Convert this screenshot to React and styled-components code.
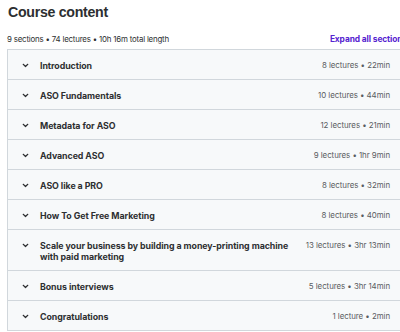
import React from "react";
import styled, { createGlobalStyle } from "styled-components";

const GlobalStyle = createGlobalStyle`
  html, body {
    margin: 0;
    padding: 0;
    background: #ffffff;
    overflow: hidden;
  }
  body {
    font-family: "Inter", "Liberation Sans", sans-serif;
    color: #2d2f31;
  }
`;

const Page = styled.div`
  width: 400px;
  padding: 0 0 0 7px;
`;

const Title = styled.h2`
  margin: 0;
  padding: 3px 0 0 1px;
  font-family: "Liberation Sans", "Inter", sans-serif;
  font-size: 14.2px;
  font-weight: 700;
  letter-spacing: -0.3px;
  line-height: 18px;
`;

const Summary = styled.div`
  display: flex;
  justify-content: space-between;
  align-items: center;
  margin-top: 11px;
  height: 14px;
  font-size: 7.9px;
  letter-spacing: -0.2px;
  color: #2d2f31;
  white-space: nowrap;
`;

const ExpandAll = styled.button`
  border: none;
  background: none;
  padding: 0;
  font-family: inherit;
  font-size: 8.4px;
  font-weight: 700;
  letter-spacing: -0.1px;
  color: #5624d0;
  cursor: pointer;
  white-space: nowrap;
`;

const Sections = styled.div`
  margin-top: 3px;
  border: 1px solid #d1d7dc;
  border-top: none;
`;

const Row = styled.div`
  display: flex;
  align-items: flex-start;
  box-sizing: border-box;
  min-height: 30px;
  padding: 9.5px 16px 8.5px 14px;
  background: #f7f9fa;
  border-top: 1px solid #d1d7dc;
  cursor: pointer;
`;

const Chevron = styled.span`
  display: flex;
  align-items: center;
  height: 11px;
  width: 18px;
  flex-shrink: 0;
  color: #2d2f31;
`;

const SectionTitle = styled.div`
  flex: 1;
  font-size: 8.8px;
  font-weight: 700;
  line-height: 11px;
  letter-spacing: -0.05px;
  padding-right: 12px;
`;

const Meta = styled.div`
  flex-shrink: 0;
  font-size: 7.9px;
  line-height: 11px;
  letter-spacing: -0.05px;
  color: #595c5f;
  white-space: nowrap;
`;

const sections = [
  { title: "Introduction", meta: "8 lectures • 22min" },
  { title: "ASO Fundamentals", meta: "10 lectures • 44min" },
  { title: "Metadata for ASO", meta: "12 lectures • 21min" },
  { title: "Advanced ASO", meta: "9 lectures • 1hr 9min" },
  { title: "ASO like a PRO", meta: "8 lectures • 32min" },
  { title: "How To Get Free Marketing", meta: "8 lectures • 40min" },
  {
    title: "Scale your business by building a money-printing machine with paid marketing",
    meta: "13 lectures • 3hr 13min",
  },
  { title: "Bonus interviews", meta: "5 lectures • 3hr 14min" },
  { title: "Congratulations", meta: "1 lecture • 2min" },
];

const ChevronIcon = () => (
  <svg width="7" height="5" viewBox="0 0 7 5" fill="none">
    <path d="M1.2 1.3 L3.5 3.5 L5.8 1.3" stroke="currentColor" strokeWidth="1.2" strokeLinecap="round" strokeLinejoin="round" />
  </svg>
);

export default function App() {
  return (
    <Page>
      <GlobalStyle />
      <Title>Course content</Title>
      <Summary>
        <span>9 sections • 74 lectures • 10h 16m total length</span>
        <ExpandAll>Expand all sections</ExpandAll>
      </Summary>
      <Sections>
        {sections.map((s) => (
          <Row key={s.title}>
            <Chevron>
              <ChevronIcon />
            </Chevron>
            <SectionTitle>{s.title}</SectionTitle>
            <Meta>{s.meta}</Meta>
          </Row>
        ))}
      </Sections>
    </Page>
  );
}
